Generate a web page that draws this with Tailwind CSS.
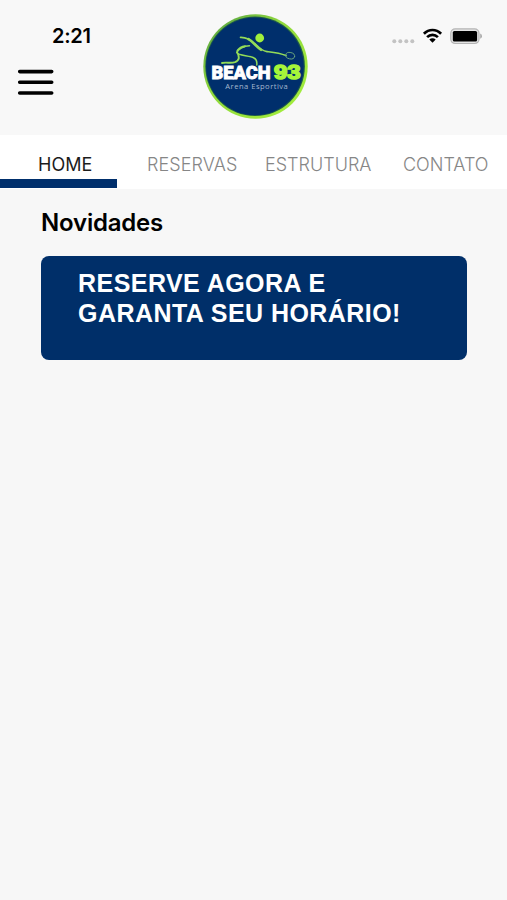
<!DOCTYPE html>
<html lang="pt-BR">
<head>
    <meta charset="UTF-8">
    <meta name="viewport" content="width=device-width, initial-scale=1.0">
    <title>Beach 93 - Arena Esportiva</title>
    <script src="https://cdn.jsdelivr.net/npm/@tailwindcss/browser@4"></script>
</head>
<body class="min-h-screen bg-[#f7f7f7] font-['Inter',sans-serif] text-black">

    <header class="h-[135px] grid grid-cols-[203px_105px_1fr] bg-[#f8f8f8]">
        <div class="pt-[22px]">
            <p class="pl-[52px] h-7 leading-[29px] text-[20px] font-semibold tracking-[-0.3px]">2:21</p>
            <button class="ml-[17px] mt-[18px] block" aria-label="Menu">
                <svg class="block" width="38" height="30" viewBox="0 0 38 30" stroke="#000" stroke-width="3.6" stroke-linecap="round">
                    <path d="M2.7 3.6H34.7M2.7 14.3H34.7M2.7 25H34.7" />
                </svg>
            </button>
        </div>

        <svg class="block mt-[14px]" width="105" height="105" viewBox="8 9 105 105">
            <defs>
                <linearGradient id="ring" x1="0" y1="0" x2="1" y2="1">
                    <stop offset="0" stop-color="#4f9a45" />
                    <stop offset="0.4" stop-color="#8fd83c" />
                    <stop offset="1" stop-color="#a6f23c" />
                </linearGradient>
            </defs>
            <circle cx="60.5" cy="61.5" r="52.2" fill="url(#ring)" />
            <circle cx="60.1" cy="61.2" r="49.8" fill="#1d5a4c" />
            <circle cx="59.9" cy="61.3" r="48.8" fill="#002f6c" />
            <!-- player -->
            <circle cx="64.7" cy="33" r="4.4" fill="#a0f03c" />
            <g fill="none" stroke="#93dc58" stroke-linecap="round" stroke-linejoin="round">
                <path d="M45.5 32.4C52 32.2 56 35 60 39C64 43 67 46 72 46.6C78 47.3 84 47.8 91 50.6" stroke-width="1.6" />
                <path d="M53.5 34.2C58 36.8 61.5 41.5 66 44.8" stroke-width="2.6" />
                <path d="M54.5 40.8C49 41 43 44 42 47.3C42.6 50.2 51 50.3 56 51.8C61.5 53 62.3 56 61.8 60" stroke-width="1.5" />
                <path d="M42 47.3C45 51.5 44.5 55.5 40 57.2C36 58.6 31 57 27 58" stroke-width="1.9" />
                <path d="M42.5 45.5C44 43.5 47 41.7 50 41.2" stroke-width="2" />
                <ellipse cx="95.2" cy="50.7" rx="4.5" ry="3.2" stroke="#6ba77c" stroke-width="0.9" transform="rotate(12 95.2 50.7)" />
            </g>
            <text x="16.6" y="74.4" font-family="Roboto, sans-serif" font-weight="900" font-size="18.2" fill="#fff" stroke="#fff" stroke-width="0.8" textLength="59" lengthAdjust="spacingAndGlyphs">BEACH</text>
            <text x="79" y="73.8" font-family="Liberation Sans, sans-serif" font-weight="700" font-size="20" fill="#a6f53a" stroke="#a6f53a" stroke-width="1.6" textLength="26.6" lengthAdjust="spacingAndGlyphs">93</text>
            <text x="30.3" y="83.6" font-family="Open Sans, sans-serif" font-size="7.6" fill="#a5b8cf" textLength="62.5">Arena Esportiva</text>
        </svg>

        <div class="pt-[26px] pl-[82px]">
            <svg class="block" width="96" height="20" viewBox="0 0 96 20">
                <g fill="#c3c3c3">
                    <circle cx="4.3" cy="15.2" r="2" />
                    <circle cx="10.3" cy="15.2" r="2" />
                    <circle cx="16.3" cy="15.2" r="2" />
                    <circle cx="22.3" cy="15.2" r="2" />
                </g>
                <g fill="none" stroke="#000" stroke-width="2.7">
                    <path d="M33.9 7.8C39 2.7 46 2.7 51.1 7.8" />
                    <path d="M37.1 11.1C40.2 8.1 44.8 8.1 47.9 11.1" />
                </g>
                <path d="M42.5 16.8L39.3 13.5C41.1 11.8 43.9 11.8 45.7 13.5Z" fill="#000" />
                <rect x="60.8" y="2.9" width="28.2" height="14.6" rx="4.4" fill="#e4e4e4" stroke="#b4b4b4" stroke-width="1.2" />
                <rect x="62.8" y="4.9" width="24.3" height="10.7" rx="1.6" fill="#000" />
                <path d="M90.2 7.6Q92 8.5 92 10.2T90.2 12.8Z" fill="#aaa" />
            </svg>
        </div>
    </header>

    <nav class="h-[54px] flex bg-white text-[18px] leading-[60px] text-[#868686] font-light overflow-hidden">
        <a class="w-[117px] pl-[38px] border-b-9 border-[#002f6c] text-[#1c1c1c] font-normal h-[53px]">HOME</a>
        <a class="w-[148px] pl-[30px] tracking-[0.1px]">RESERVAS</a>
        <a class="w-[138px]">ESTRUTURA</a>
        <a>CONTATO</a>
    </nav>

    <main class="pl-[41px] pr-[40px] pt-[18px]">
        <h2 class="h-8 leading-8 text-[24px] font-semibold tracking-[-0.2px]">Novidades</h2>
        <section class="mt-[17px] h-[104px] rounded-lg bg-[#002f69] pl-[37px] pt-[13px] text-white font-['Liberation_Sans',sans-serif] font-bold text-[25px] leading-[29.5px] tracking-[0.45px]">
            <p>RESERVE AGORA E</p>
            <p>GARANTA SEU HORÁRIO!</p>
        </section>
    </main>

</body>
</html>
